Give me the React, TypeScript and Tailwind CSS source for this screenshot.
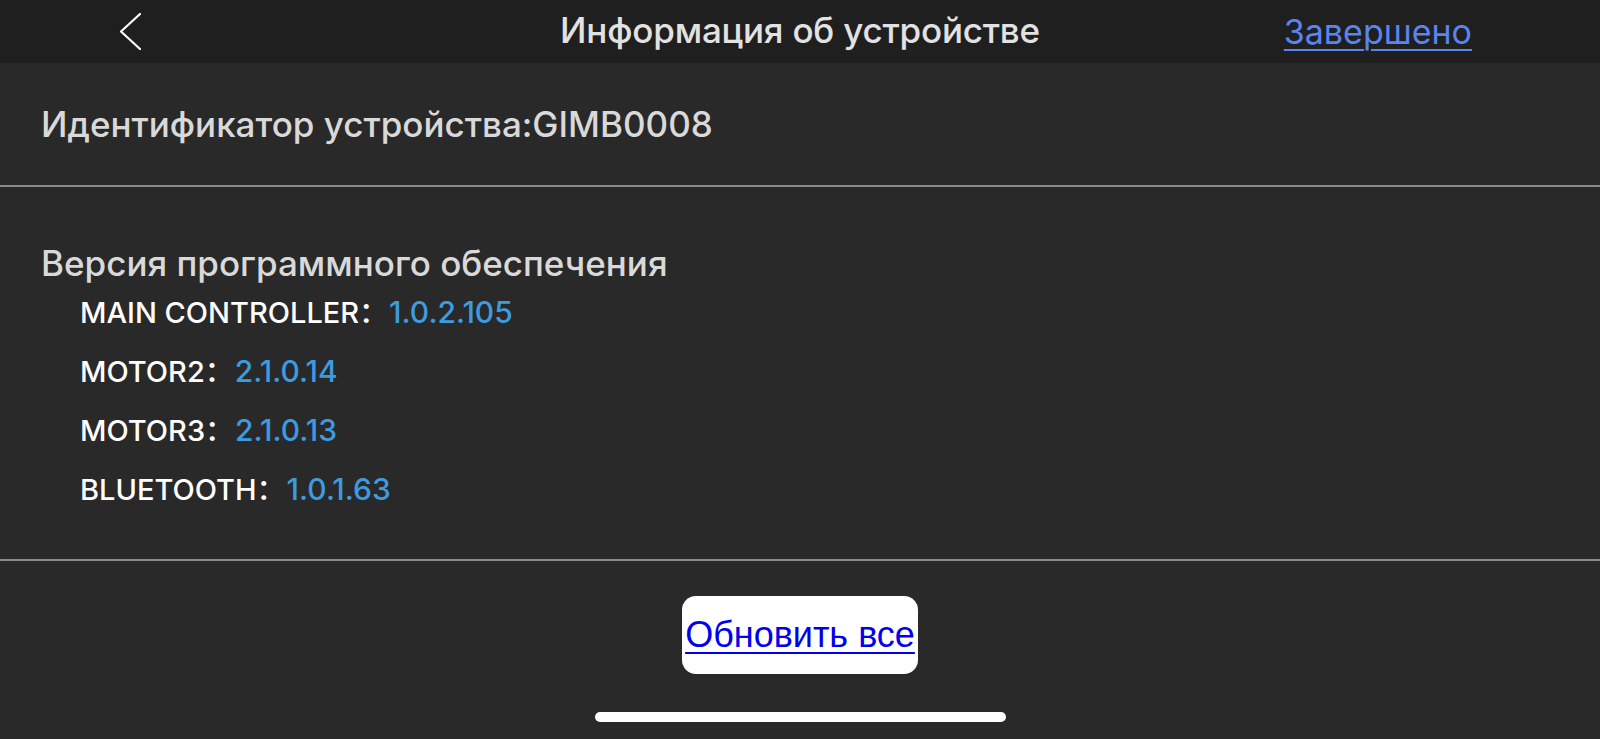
const VERSIONS: { name: string; version: string }[] = [
  { name: "MAIN CONTROLLER", version: "1.0.2.105" },
  { name: "MOTOR2", version: "2.1.0.14" },
  { name: "MOTOR3", version: "2.1.0.13" },
  { name: "BLUETOOTH", version: "1.0.1.63" },
];

function BackChevron() {
  return (
    <svg width="26" height="40" viewBox="0 0 26 40" fill="none" aria-hidden>
      <path d="M23 2 L4 19.5 L23 37" stroke="#ffffff" strokeWidth="2.2" strokeLinecap="round" strokeLinejoin="round" />
    </svg>
  );
}

export default function App() {
  return (
    <div className="flex h-[739px] w-[1600px] flex-col overflow-hidden bg-[#292929] font-['Inter','Noto_Sans_CJK_SC',sans-serif]">
      <header className="grid h-[63px] shrink-0 grid-cols-[1fr_auto_1fr] items-center bg-[#1f1f1f]">
        <div className="pl-[117px] pt-[1px]">
          <BackChevron />
        </div>
        <h1 className="-mt-[2px] text-[35px] font-medium tracking-[-0.2px] text-[#e2e2e2]">Информация об устройстве</h1>
        <div className="flex justify-end pr-[128px]">
          <a href="#" className="text-[34px] text-[#5b84ee] underline decoration-2 underline-offset-[5px]">
            Завершено
          </a>
        </div>
      </header>

      <section className="flex h-[122px] shrink-0 items-center pl-[41px]">
        <p className="text-[35px] font-medium text-[#d9d9d9]">Идентификатор устройства:GIMB0008</p>
      </section>
      <div className="h-[2px] shrink-0 bg-[#8a8a8a]" />

      <section className="flex h-[372px] shrink-0 flex-col pl-[41px] pt-[55px]">
        <h2 className="text-[35px] font-medium leading-[42px] text-[#d9d9d9]">Версия программного обеспечения</h2>
        <ul className="-mt-[1px] flex flex-col pl-[39px]">
          {VERSIONS.map((v) => (
            <li key={v.name} className="flex h-[59px] items-center text-[29px] font-medium">
              <span className="text-white">{v.name}：</span>
              <span className="ml-[1px] text-[30px] text-[#3d9be0]">{v.version}</span>
            </li>
          ))}
        </ul>
      </section>
      <div className="h-[2px] shrink-0 bg-[#8a8a8a]" />

      <div className="flex justify-center pt-[35px]">
        <button
          type="button"
          className="flex h-[78px] w-[236px] items-center justify-center rounded-[14px] bg-white font-['Liberation_Sans',sans-serif] text-[36px] text-[#0000ee] underline decoration-2 underline-offset-[5px]"
        >
          Обновить все
        </button>
      </div>

      <div className="mt-auto flex justify-center pb-[17px]">
        <div className="h-[10px] w-[411px] rounded-full bg-white" />
      </div>
    </div>
  );
}
